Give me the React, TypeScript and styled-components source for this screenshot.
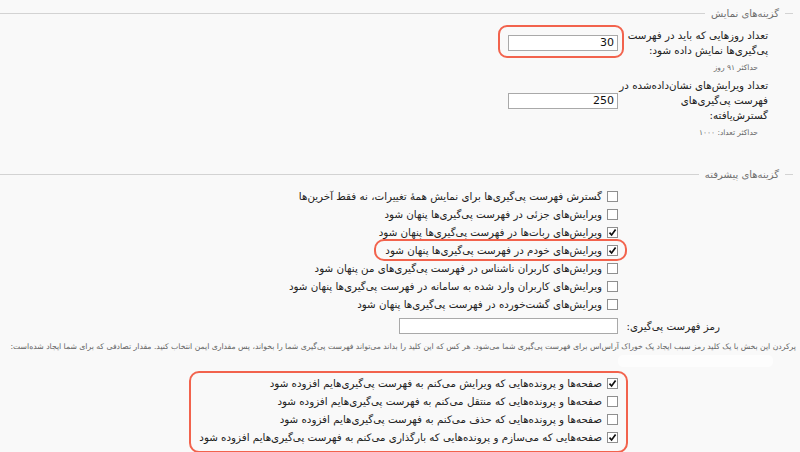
import React from "react";
import styled, { createGlobalStyle } from "styled-components";

const GlobalStyle = createGlobalStyle`
  html, body {
    margin: 0;
    padding: 0;
    background: #f9f9f9;
    font-family: "DejaVu Sans", sans-serif;
    color: #222;
    overflow: hidden;
  }
`;

const line = "#d3d3d3";
const mark = "#f2634d";

const Page = styled.div`
  direction: rtl;
  width: 800px;
  height: 452px;
  padding: 6px 7px 0 0;
  box-sizing: border-box;
  overflow: hidden;
`;

const Legend = styled.div<{ $top?: number }>`
  display: flex;
  align-items: center;
  height: 14px;
  margin-top: ${({ $top }) => $top ?? 0}px;
  font-size: 10px;
  color: #6f6f6f;
  white-space: nowrap;

  &::before {
    content: "";
    width: 8px;
    border-top: 1px solid ${line};
  }
  &::after {
    content: "";
    flex: 1;
    border-top: 1px solid ${line};
  }
`;

const LegendText = styled.span`
  padding: 0 6px;
`;

const FormGrid = styled.div<{ $field?: number; $top?: number }>`
  display: grid;
  grid-template-columns: 140px ${({ $field }) => $field ?? 110}px;
  column-gap: 10px;
  row-gap: 5px;
  align-items: center;
  padding-right: 25px;
  margin-top: ${({ $top }) => $top ?? 0}px;
`;

const Label = styled.div<{ $indent?: number }>`
  font-size: 10.3px;
  line-height: 15px;
  white-space: nowrap;
  padding-right: ${({ $indent }) => $indent ?? 0}px;
`;

const Field = styled.div`
  display: flex;
  justify-content: flex-start;
`;

const TextInput = styled.div<{ $width: number }>`
  width: ${({ $width }) => $width}px;
  height: 16px;
  box-sizing: border-box;
  border: 1px solid #a9a9a9;
  background: #fff;
  font-size: 11px;
  line-height: 14px;
  padding: 0 3px;
  text-align: right;
  direction: ltr;
  color: #111;
`;

const InputMark = styled.div`
  border: 2px solid ${mark};
  border-radius: 9px;
  padding: 8px 4px 5px 8px;
  margin: -10px -6px -7px -10px;
`;

const Help = styled.div`
  grid-column: 1 / -1;
  font-size: 7.5px;
  line-height: 10px;
  color: #666;
  padding-right: 10px;
  white-space: nowrap;
`;

const CheckList = styled.div`
  display: flex;
  flex-direction: column;
  align-items: flex-start;
  padding-right: 175px;
  margin-top: 6px;
`;

const CheckRow = styled.div<{ $marked?: boolean }>`
  display: flex;
  align-items: center;
  gap: 5px;
  height: 18px;
  width: fit-content;
  font-size: 10.3px;
  white-space: nowrap;
  ${({ $marked }) =>
    $marked &&
    `
    border: 2px solid ${mark};
    border-radius: 10px;
    padding: 0 7px 0 9px;
    margin: -2px -9px -2px 0;
  `}
`;

const Box = styled.span`
  width: 11px;
  height: 11px;
  box-sizing: border-box;
  border: 1px solid #8f8f8f;
  background: #fff;
  display: flex;
  align-items: center;
  justify-content: center;
  flex: none;
`;

const Note = styled.div`
  margin: 8px -3px 0 0;
  font-size: 7.7px;
  line-height: 10px;
  color: #666;
  white-space: nowrap;
`;

const TokenValue = styled.div`
  width: 155px;
  height: 12px;
  margin: 3px 20px 0 0;
  background: #fdfdfd;
  border-radius: 5px;
`;

const GroupMark = styled.div`
  display: flex;
  flex-direction: column;
  width: fit-content;
  margin: 4px 165px 0 0;
  padding: 1px 8px 5px 8px;
  border: 2px solid ${mark};
  border-radius: 10px;
`;

const Check = ({ on, text, marked }: { on?: boolean; text: string; marked?: boolean }) => (
  <CheckRow $marked={marked}>
    <Box>
      {on && (
        <svg width="9" height="9" viewBox="0 0 9 9">
          <path d="M1.5 4.6 L3.6 7 L7.6 1.6" fill="none" stroke="#111" strokeWidth="1.7" />
        </svg>
      )}
    </Box>
    <span>{text}</span>
  </CheckRow>
);

const advanced = [
  { text: "گسترش فهرست پی‌گیری‌ها برای نمایش همهٔ تغییرات، نه فقط آخرین‌ها" },
  { text: "ویرایش‌های جزئی در فهرست پی‌گیری‌ها پنهان شود" },
  { text: "ویرایش‌های ربات‌ها در فهرست پی‌گیری‌ها پنهان شود", on: true },
  { text: "ویرایش‌های خودم در فهرست پی‌گیری‌ها پنهان شود", on: true, marked: true },
  { text: "ویرایش‌های کاربران ناشناس در فهرست پی‌گیری‌های من پنهان شود" },
  { text: "ویرایش‌های کاربران وارد شده به سامانه در فهرست پی‌گیری‌ها پنهان شود" },
  { text: "ویرایش‌های گشت‌خورده در فهرست پی‌گیری‌ها پنهان شود" },
];

const autoWatch = [
  { text: "صفحه‌ها و پرونده‌هایی که ویرایش می‌کنم به فهرست پی‌گیری‌هایم افزوده شود", on: true },
  { text: "صفحه‌ها و پرونده‌هایی که منتقل می‌کنم به فهرست پی‌گیری‌هایم افزوده شود" },
  { text: "صفحه‌ها و پرونده‌هایی که حذف می‌کنم به فهرست پی‌گیری‌هایم افزوده شود" },
  { text: "صفحه‌هایی که می‌سازم و پرونده‌هایی که بارگذاری می‌کنم به فهرست پی‌گیری‌هایم افزوده شود", on: true },
];

export default function App() {
  return (
    <>
      <GlobalStyle />
      <Page>
        <Legend>
          <LegendText>گزینه‌های نمایش</LegendText>
        </Legend>
        <FormGrid $top={8}>
          <Label>
            تعداد روزهایی که باید در فهرست
            <br />
            پی‌گیری‌ها نمایش داده شود:
          </Label>
          <Field>
            <InputMark>
              <TextInput $width={110}>30</TextInput>
            </InputMark>
          </Field>
          <Help>حداکثر ۹۱ روز</Help>
          <Label>
            تعداد ویرایش‌های نشان‌داده‌شده در
            <br />
            فهرست پی‌گیری‌های
            <br />
            گسترش‌یافته:
          </Label>
          <Field>
            <TextInput $width={110}>250</TextInput>
          </Field>
          <Help>حداکثر تعداد: ۱۰۰۰</Help>
        </FormGrid>

        <Legend $top={29}>
          <LegendText>گزینه‌های پیشرفته</LegendText>
        </Legend>
        <CheckList>
          {advanced.map((c) => (
            <Check key={c.text} {...c} />
          ))}
        </CheckList>
        <FormGrid $field={219} $top={5}>
          <Label $indent={48}>رمز فهرست پی‌گیری:</Label>
          <Field>
            <TextInput $width={219} />
          </Field>
        </FormGrid>
        <Note>
          پرکردن این بخش با یک کلید رمز سبب ایجاد یک خوراک آراس‌اس برای فهرست پی‌گیری شما می‌شود. هر کس که این کلید را بداند می‌تواند فهرست پی‌گیری شما را بخواند، پس مقداری ایمن انتخاب کنید. مقدار تصادفی که برای شما ایجاد شده‌است:
        </Note>
        <TokenValue />
        <GroupMark>
          {autoWatch.map((c) => (
            <Check key={c.text} {...c} />
          ))}
        </GroupMark>
      </Page>
    </>
  );
}
